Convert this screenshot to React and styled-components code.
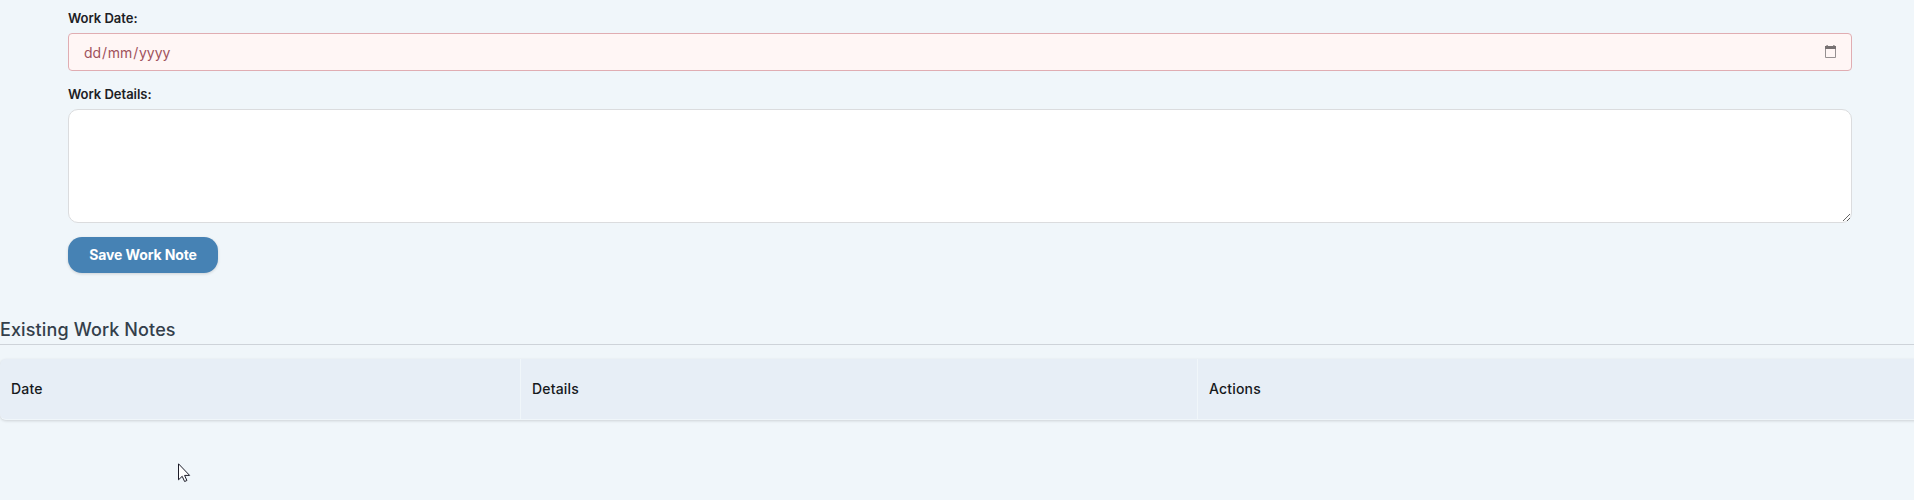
import React from "react";
import styled, { createGlobalStyle } from "styled-components";

const GlobalStyle = createGlobalStyle`
  *, *::before, *::after { box-sizing: border-box; }
  body {
    margin: 0;
    background: #f0f6fa;
    color: #212529;
    font-family: Inter, "Liberation Sans", sans-serif;
    overflow: hidden;
  }
`;

const Page = styled.main`
  position: relative;
  height: 500px;
  overflow: hidden;
`;

const Form = styled.form`
  display: flex;
  flex-direction: column;
  align-items: flex-start;
  padding: 8px 62px 0 68px;
`;

const Label = styled.label`
  height: 20px;
  margin-bottom: 5px;
  font-size: 13px;
  font-weight: 600;
  letter-spacing: -0.02px;
  line-height: 20px;
  color: #1c2024;
`;

const DateField = styled.div`
  display: flex;
  align-items: center;
  justify-content: space-between;
  width: 100%;
  height: 38px;
  margin-bottom: 13px;
  padding: 2px 14px 0 15px;
  border: 1px solid #e0adb2;
  border-radius: 4px;
  background: #fff6f5;
  color: #a0525c;
  font-size: 14px;
`;

const DateText = styled.span`
  display: flex;
  line-height: 20px;
`;

const Separator = styled.span`
  padding: 0 0.8px;
`;

const CalendarIcon = styled.svg`
  display: block;
  width: 13px;
  height: 14px;
  margin-top: -3px;
`;

const DetailsArea = styled.textarea`
  display: block;
  width: 100%;
  height: 114px;
  margin-bottom: 14px;
  padding: 10px 14px;
  border: 1px solid #dbdcde;
  border-radius: 10px;
  background: #fff;
  font: inherit;
  font-size: 14px;
  resize: vertical;
  outline: none;
`;

const SaveButton = styled.button`
  width: 150px;
  height: 36px;
  padding: 0 0 2px;
  border: 0;
  border-radius: 14px;
  background: #4682b4;
  box-shadow: 0 1px 3px rgba(0, 0, 0, 0.15);
  color: #fff;
  font-family: inherit;
  font-size: 14px;
  font-weight: 700;
  letter-spacing: -0.12px;
`;

const SectionTitle = styled.h2`
  height: 32px;
  margin: 40px 0 14px;
  border-bottom: 1px solid #ced3d9;
  color: #343f4b;
  font-size: 18px;
  font-weight: 500;
  letter-spacing: 0.12px;
  line-height: 34px;
`;

const NotesTable = styled.div`
  display: grid;
  grid-template-columns: 521px 677px 1fr;
  height: 61px;
  margin-right: -8px;
  border-bottom: 1px solid #f0f6fa;
  border-radius: 6px;
  box-shadow: 0 1px 3px rgba(0, 0, 0, 0.15);
  background: #e7eef6;
`;

const HeaderCell = styled.div`
  display: flex;
  align-items: center;
  padding: 0 11px 2px;
  border-right: 1px solid #f0f6fa;
  font-size: 14px;
  font-weight: 500;
  letter-spacing: 0.18px;
  color: #16191c;
  &:last-child { border-right: 0; }
`;

const Cursor = styled.svg`
  position: absolute;
  left: 178px;
  top: 463px;
  width: 13px;
  height: 20px;
`;

export default function App() {
  return (
    <>
      <GlobalStyle />
      <Page>
        <Form>
          <Label>Work Date:</Label>
          <DateField>
            <DateText>
              dd<Separator>/</Separator>mm<Separator>/</Separator>yyyy
            </DateText>
            <CalendarIcon viewBox="0 0 13 14">
              <path d="M1.5 4v8.5h10V4" fill="none" stroke="#969091" />
              <path d="M1 1h11v3H1zM2.5 0h1.2v1H2.5zM9.3 0h1.2v1H9.3z" fill="#777172" />
            </CalendarIcon>
          </DateField>
          <Label htmlFor="details">Work Details:</Label>
          <DetailsArea id="details" />
          <SaveButton type="button">Save Work Note</SaveButton>
        </Form>
        <SectionTitle>Existing Work Notes</SectionTitle>
        <NotesTable>
          <HeaderCell>Date</HeaderCell>
          <HeaderCell>Details</HeaderCell>
          <HeaderCell>Actions</HeaderCell>
        </NotesTable>
        <Cursor viewBox="0 0 13 20">
          <path
            d="M.5.8v16l3.7-3.5 2.4 5.2 2.3-1-2.3-5.1h5z"
            fill="#fff"
            stroke="#1c1c28"
          />
        </Cursor>
      </Page>
    </>
  );
}
